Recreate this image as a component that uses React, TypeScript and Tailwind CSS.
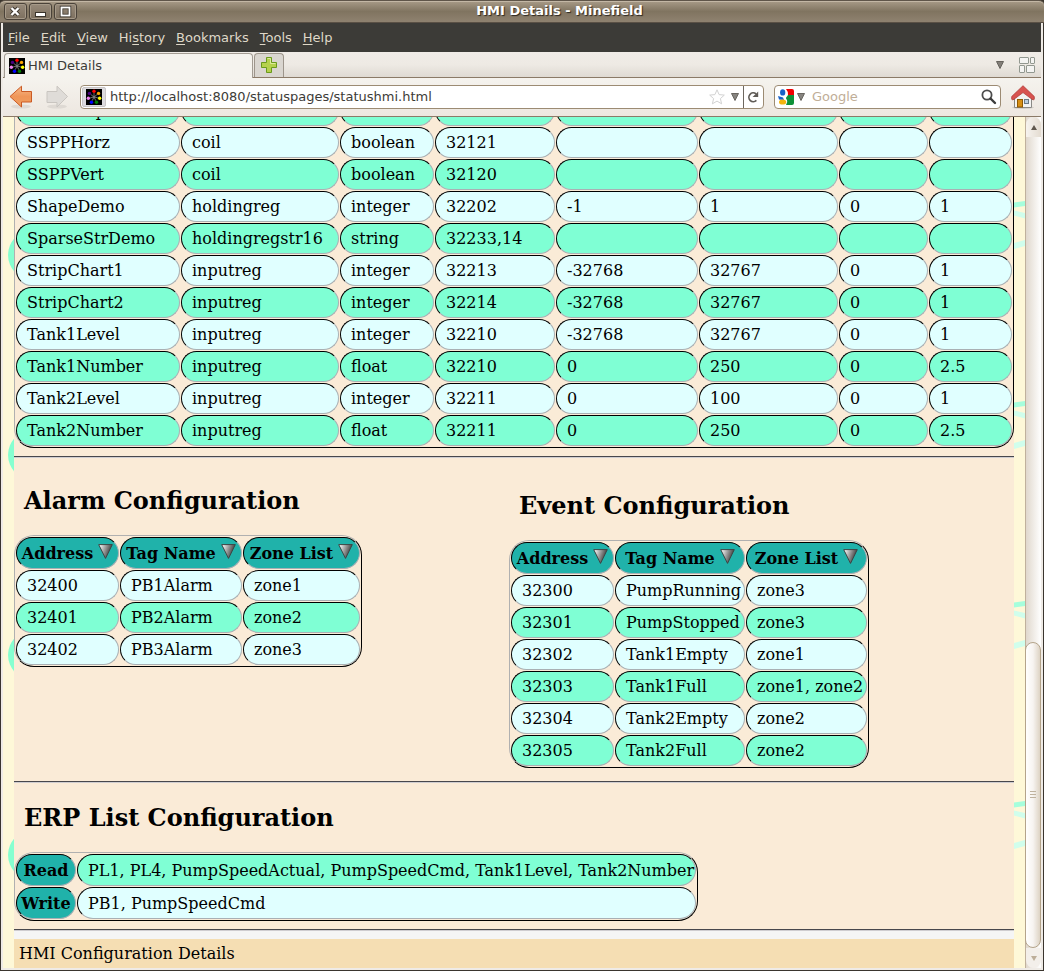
import React from "react";
import clsx from "clsx";

const tagRows: string[][] = [
  ["SSPPGrip", "coil", "boolean", "32122", "", "", "", ""],
  ["SSPPHorz", "coil", "boolean", "32121", "", "", "", ""],
  ["SSPPVert", "coil", "boolean", "32120", "", "", "", ""],
  ["ShapeDemo", "holdingreg", "integer", "32202", "-1", "1", "0", "1"],
  ["SparseStrDemo", "holdingregstr16", "string", "32233,14", "", "", "", ""],
  ["StripChart1", "inputreg", "integer", "32213", "-32768", "32767", "0", "1"],
  ["StripChart2", "inputreg", "integer", "32214", "-32768", "32767", "0", "1"],
  ["Tank1Level", "inputreg", "integer", "32210", "-32768", "32767", "0", "1"],
  ["Tank1Number", "inputreg", "float", "32210", "0", "250", "0", "2.5"],
  ["Tank2Level", "inputreg", "integer", "32211", "0", "100", "0", "1"],
  ["Tank2Number", "inputreg", "float", "32211", "0", "250", "0", "2.5"],
];

const alarmRows = [
  ["32400", "PB1Alarm", "zone1"],
  ["32401", "PB2Alarm", "zone2"],
  ["32402", "PB3Alarm", "zone3"],
];

const eventRows = [
  ["32300", "PumpRunning", "zone3"],
  ["32301", "PumpStopped", "zone3"],
  ["32302", "Tank1Empty", "zone1"],
  ["32303", "Tank1Full", "zone1, zone2"],
  ["32304", "Tank2Empty", "zone2"],
  ["32305", "Tank2Full", "zone2"],
];

const menus = ["File", "Edit", "View", "History", "Bookmarks", "Tools", "Help"];
// Index of the underlined access key in each menu label.
const accessKey: Record<string, number> = { History: 2 };

const tableClass =
  "border-separate border-spacing-[1px] rounded-[20px] border border-t-[#b0b0b0] border-l-[#b0b0b0] border-r-black border-b-black";
const cellClass =
  "h-[31px] whitespace-nowrap rounded-[16px] border border-t-black border-l-black border-r-[#a9b0b4] border-b-[#a9b0b4]";
const headClass = "bg-[#20b2aa] px-1 pt-[6px] pb-1 leading-5";

function Td({ green, children }: { green: boolean; children?: React.ReactNode }) {
  return (
    <td className={clsx(cellClass, "py-[5px] pr-0 pl-[10px] leading-[19px]", green ? "bg-[#7fffd4]" : "bg-[#e0ffff]")}>
      {children}
    </td>
  );
}

function SortIcon({ id }: { id: string }) {
  return (
    <svg className="h-[15px] w-[15px] self-start" viewBox="0 0 15 15" aria-hidden="true">
      <defs>
        <linearGradient id={id} x1="0" y1="0" x2="1" y2="0.35">
          <stop offset="0.1" stopColor="#f4f4f4" />
          <stop offset="1" stopColor="#303030" />
        </linearGradient>
      </defs>
      <path d="M0.7 0.6H14.3L7.5 14.4Z" fill={`url(#${id})`} stroke="#3c4444" strokeWidth="1" />
    </svg>
  );
}

function SortHeader({ label, id }: { label: string; id: string }) {
  return (
    <th className={clsx(cellClass, headClass)}>
      <button type="button" className="flex w-full items-center justify-center gap-[5px] font-bold">
        {label}
        <SortIcon id={id} />
      </button>
    </th>
  );
}

function ZoneTable({ name, rows, cols }: { name: string; rows: string[][]; cols: string[] }) {
  return (
    <table className={tableClass} aria-label={name}>
      <colgroup>
        {cols.map((c, i) => (
          <col key={i} className={c} />
        ))}
      </colgroup>
      <thead>
        <tr>
          <SortHeader label="Address" id={name + "-a"} />
          <SortHeader label="Tag Name" id={name + "-t"} />
          <SortHeader label="Zone List" id={name + "-z"} />
        </tr>
      </thead>
      <tbody>
        {rows.map((r, i) => (
          <tr key={r[0]}>
            {r.map((c, j) => (
              <Td key={j} green={i % 2 === 1}>{c}</Td>
            ))}
          </tr>
        ))}
      </tbody>
    </table>
  );
}

function Rule() {
  return <hr className="h-[2px] shrink-0 border-t border-b border-t-[#47474c] border-b-[#cfcdd0]" />;
}

function Heading({ children }: { children: React.ReactNode }) {
  return <h2 className="mt-5 mb-[19px] pl-[10px] text-2xl leading-[30px] font-bold">{children}</h2>;
}

function Favicon() {
  const dots = ["#ff0000", "#ffa500", "#ffff00", "#008000", "#0000ff", "#ee82ee", "#4b0082"];
  return (
    <svg className="h-4 w-4 shrink-0" viewBox="0 0 16 16" aria-hidden="true">
      <rect width="16" height="16" fill="#000" />
      {dots.map((c, i) => {
        const a = (i * 2 * Math.PI) / 7 - Math.PI / 2;
        const x = 8 + Math.cos(a) * 5.8;
        const y = 8 + Math.sin(a) * 5.8;
        return (
          <g key={c}>
            <line x1="8" y1="8" x2={8 + Math.cos(a) * 4} y2={8 + Math.sin(a) * 4} stroke="#777" strokeWidth="0.9" />
            <circle cx={x} cy={y} r="1.7" fill={c} />
          </g>
        );
      })}
      <circle cx="8" cy="8" r="1.3" fill="#777" />
    </svg>
  );
}

function Caret() {
  return (
    <svg className="h-2 w-2 shrink-0 text-[#5f5b55]" viewBox="0 0 8 8" aria-hidden="true">
      <path d="M0.5 0.5H7.5L4 7.5Z" fill="currentColor" fillOpacity="0.75" stroke="currentColor" strokeWidth="0.9" />
    </svg>
  );
}

function Arrow({ forward }: { forward?: boolean }) {
  return (
    <svg className="h-6 w-6" viewBox="0 0 24 24" aria-hidden="true">
      <defs>
        <linearGradient id="backFill" x1="0" y1="0" x2="0" y2="1">
          <stop offset="0" stopColor="#f6b98a" />
          <stop offset="0.5" stopColor="#ef9558" />
          <stop offset="1" stopColor="#f0a060" />
        </linearGradient>
      </defs>
      <ellipse cx="12" cy="21.5" rx="10" ry="2" fill="#000" opacity="0.07" />
      {forward ? (
        <path d="M22.5 11.5L12 1.2V6.5H2V17.5H12V22Z" fill="#dfdcd8" stroke="#c9c5c0" />
      ) : (
        <path d="M1 11.5L12.5 1.2V6.5H22.5V17H12.5V22Z" fill="url(#backFill)" stroke="#cb5a24" />
      )}
    </svg>
  );
}

function WindowButton({ label, children }: { label: string; children: React.ReactNode }) {
  return (
    <button type="button" aria-label={label} className="h-[17px] w-[23px] rounded-[3px] border border-[#4a4239] bg-gradient-to-b from-[#978a7a] to-[#7d705f] shadow-[inset_0_0_0_1px_#a69a89]">
      <svg className="mx-auto h-[15px] w-[21px]" viewBox="0 0 21 15" aria-hidden="true">{children}</svg>
    </button>
  );
}

// One margin of the page, showing the edge of the tiled backdrop.
function Gutter({ side }: { side: "left" | "right" }) {
  const id = "tile-" + side;
  return (
    <svg className="h-full w-[11px] shrink-0 bg-[#fef8d8]" aria-hidden="true">
      <defs>
        <pattern id={id} width="11" height="200" patternUnits="userSpaceOnUse">
          {side === "left" ? (
            <circle cx="30" cy="138" r="25" fill="#86ffd0" />
          ) : (
            <g>
              <path d="M0 85.5L11 84V89L0 90.5Z" fill="#a6fedc" />
              <path d="M0 93.5L11 96V101.5L0 98.5Z" fill="#d0feec" />
              <path d="M0 126L11 123V129L0 132Z" fill="#d0feec" />
            </g>
          )}
        </pattern>
      </defs>
      <rect width="100%" height="100%" fill={`url(#${id})`} />
    </svg>
  );
}

function BrowserChrome() {
  return (
    <>
      <nav className="flex h-[29px] shrink-0 items-center gap-[11px] bg-[#3c3b37] px-[5px] text-[#dfd8c8]">
        {menus.map((m) => {
          const k = accessKey[m] ?? 0;
          return (
            <button key={m} type="button">
              {m.slice(0, k)}
              <span className="underline underline-offset-2">{m[k]}</span>
              {m.slice(k + 1)}
            </button>
          );
        })}
      </nav>

      <div className="flex h-[26px] shrink-0 items-end border-b border-[#8b7a67] bg-gradient-to-b from-[#f0ece7] via-[#eeeae4] to-[#dfdad3] pl-px">
        <div className="-mb-px flex h-[25px] w-[249px] items-center gap-[3px] rounded-t-[4px] border border-b-0 border-[#a39c93] bg-[#f5f3ee] pb-px pl-1 text-[#3c3b37]">
          <Favicon />
          HMI Details
        </div>
        <button type="button" aria-label="New tab" className="ml-px flex h-6 w-[30px] items-center justify-center rounded-t-[4px] border border-b-0 border-[#9d958b] bg-[#dad6d0] pb-[2px]">
          <svg className="h-4 w-4" viewBox="0 0 16 16" aria-hidden="true">
            <path d="M5.5 0.5H10.5V5.5H15.5V10.5H10.5V15.5H5.5V10.5H0.5V5.5H5.5Z" fill="#b5d14c" stroke="#6a9a1c" />
            <path d="M6.5 1.5H9.5V6.5H14.5" fill="none" stroke="#dcea9c" />
          </svg>
        </button>
        <div className="flex flex-1 items-center justify-end gap-[15px] self-stretch pr-[6px]">
          <button type="button" aria-label="List all tabs"><Caret /></button>
          <button type="button" aria-label="Group tabs">
            <svg className="h-4 w-4" viewBox="0 0 16 16" fill="#f4f4f2" stroke="#929890" aria-hidden="true">
              <rect x="0.5" y="0.5" width="9" height="6" rx="0.5" />
              <rect x="11.5" y="0.5" width="4" height="6" rx="0.5" />
              <rect x="0.5" y="8.5" width="5" height="7" rx="0.5" />
              <rect x="7.5" y="8.5" width="8" height="7" rx="0.5" />
            </svg>
          </button>
        </div>
      </div>

      <div className="flex h-[39px] shrink-0 items-center border-b border-[#8b7a67] bg-gradient-to-b from-[#f5f3ee] to-[#ede7e0] pr-[6px] pl-[6px]">
        <button type="button" aria-label="Back"><Arrow /></button>
        <button type="button" aria-label="Forward" className="ml-3"><Arrow forward /></button>
        <div className="ml-[11px] flex h-6 flex-1 items-center rounded-[4px] border border-[#9c8b73] bg-white pl-px">
          <span className="flex h-5 w-6 items-center justify-center rounded-[2px] border border-[#c9c5c5] bg-[#dcdade]"><Favicon /></span>
          <input aria-label="Address" defaultValue="http://localhost:8080/statuspages/statushmi.html" className="ml-1 min-w-0 flex-1 bg-transparent text-[#3c3b37] outline-none" />
          <svg className="h-4 w-4" viewBox="0 0 16 16" aria-hidden="true">
            <path d="M8 0.8L10.1 5.6L15.3 6.1L11.4 9.6L12.6 14.8L8 12.1L3.4 14.8L4.6 9.6L0.7 6.1L5.9 5.6Z" fill="#fff" stroke="#d2d2d2" strokeLinejoin="round" />
          </svg>
          <button type="button" aria-label="Show history" className="mr-1 ml-[6px]"><Caret /></button>
          <button type="button" aria-label="Reload" className="flex h-full items-center border-l border-[#6d675f] pr-1 pl-[3px]">
            <svg className="h-3 w-3" viewBox="0 0 12 12" aria-hidden="true">
              <path d="M9.4 9.4A4.4 4.4 0 1 1 9 2.8" fill="none" stroke="#5f5b56" strokeWidth="1.7" />
              <path d="M11.2 0.4V6H5.6Z" fill="#5f5b56" />
            </svg>
          </button>
        </div>
        <div className="ml-[10px] flex h-6 w-[227px] items-center rounded-[4px] border border-[#9c8b73] bg-white px-[3px]">
          <svg className="h-4 w-4 shrink-0" viewBox="0 0 16 16" aria-hidden="true">
            <path d="M9 0H14Q16 0 16 2V6H10Q10 2 8 0Z" fill="#f00000" />
            <path d="M10 6H16V14Q16 16 14 16H8Q10 13 9 11Q7 9 9 7.5Z" fill="#0d9138" />
            <ellipse cx="4.7" cy="3.4" rx="2.6" ry="3.2" fill="#1760c8" />
            <path d="M0 7L5 8.5L6 11L1 10.5Z" fill="#1760c8" />
            <ellipse cx="4.6" cy="13" rx="3.6" ry="2.6" fill="#f5b50e" />
          </svg>
          <button type="button" aria-label="Choose search engine" className="ml-[3px]"><Caret /></button>
          <input aria-label="Search" placeholder="Google" className="ml-[7px] min-w-0 flex-1 bg-transparent outline-none placeholder:text-[#bfae97] placeholder:opacity-100" />
          <button type="button" aria-label="Search">
            <svg className="h-4 w-4" viewBox="0 0 16 16" fill="none" aria-hidden="true">
              <circle cx="6" cy="6" r="4.6" stroke="#4d4d4d" strokeWidth="1.8" />
              <path d="M9.5 9.5L14 14" stroke="#3c3c3c" strokeWidth="2.4" strokeLinecap="round" />
            </svg>
          </button>
        </div>
        <button type="button" aria-label="Home" className="ml-[10px]">
          <svg className="h-6 w-6" viewBox="0 0 24 24" aria-hidden="true">
            <ellipse cx="12" cy="22.5" rx="11" ry="1.4" fill="#000" opacity="0.12" />
            <path d="M3.5 12L12 4L20.5 12V22.5H3.5Z" fill="#f3f3f1" stroke="#8a8a86" />
            <path d="M12 0.7L23.3 11.5V14.3Q22.5 15.3 21 14.3L12 7.6L3 14.3Q1.5 15.3 0.7 14.3V11.5Z" fill="#d8534f" stroke="#a8302e" strokeWidth="0.7" />
            <rect x="6.5" y="14.5" width="5" height="7.5" fill="#d68f14" stroke="#8f5902" />
            <rect x="13.5" y="14.5" width="4" height="4" fill="#b9cde0" stroke="#6a7a86" />
          </svg>
        </button>
      </div>
    </>
  );
}

function ScrollBar() {
  return (
    <div className="flex w-4 shrink-0 flex-col border-l border-[#c0b19c] bg-gradient-to-r from-[#e0d8cd] to-white" aria-hidden="true">
      <div className="flex h-5 items-center justify-center rounded-t-full bg-gradient-to-r from-[#f6f3ef] to-[#e4dcd1]">
        <svg className="h-[5px] w-[6px]" viewBox="0 0 6 5"><path d="M3 0L6 5H0Z" fill="#5f574d" /></svg>
      </div>
      <div className="flex-[506]" />
      <div className="-ml-px flex flex-[305] flex-col items-center justify-center gap-[2px] rounded-full border border-[#b4a48b] bg-gradient-to-r from-white via-[#f7f4f1] to-[#ddd3c4]">
        <span className="h-px w-[6px] bg-[#bfb29e]" />
        <span className="h-px w-[6px] bg-[#bfb29e]" />
        <span className="h-px w-[6px] bg-[#bfb29e]" />
      </div>
      <div className="flex h-5 items-center justify-center rounded-b-full bg-[#f3efea]">
        <svg className="h-[5px] w-[6px]" viewBox="0 0 6 5"><path d="M3 5L6 0H0Z" fill="#bdae99" /></svg>
      </div>
    </div>
  );
}

function StatusPage() {
  return (
    <main className="flex min-w-0 flex-1 flex-col justify-end overflow-hidden bg-[#faebd7] font-['DejaVu_Serif','Liberation_Serif',serif] text-base text-black">
      <table className={clsx(tableClass, "mb-2 w-full table-fixed")} aria-label="Tag configuration">
        <colgroup>
          <col className="w-[164px]" />
          <col className="w-[158px]" />
          <col className="w-[94px]" />
          <col className="w-[120px]" />
          <col className="w-[142px]" />
          <col className="w-[139px]" />
          <col className="w-[89px]" />
          <col className="w-[83px]" />
        </colgroup>
        <tbody>
          {tagRows.map((r, i) => (
            <tr key={r[0]}>
              {r.map((c, j) => (
                <Td key={j} green={i % 2 === 0}>{c}</Td>
              ))}
            </tr>
          ))}
        </tbody>
      </table>
      <Rule />
      <div className="mt-2 mb-2 flex">
        <section className="w-[49.5%]">
          <Heading>Alarm Configuration</Heading>
          <ZoneTable name="alarms" rows={alarmRows} cols={["w-[103px]", "w-[122px]", "w-[117px]"]} />
        </section>
        <section className="py-[5px]">
          <Heading>Event Configuration</Heading>
          <ZoneTable name="events" rows={eventRows} cols={["w-[103px]", "w-[130px]", "w-[121px]"]} />
        </section>
      </div>
      <Rule />
      <section className="mb-2">
        <Heading>ERP List Configuration</Heading>
        <table className={tableClass} aria-label="ERP list">
          <colgroup>
            <col className="w-[60px]" />
            <col className="w-[619px]" />
          </colgroup>
          <tbody>
            <tr>
              <th className={clsx(cellClass, headClass)}>Read</th>
              <Td green>PL1, PL4, PumpSpeedActual, PumpSpeedCmd, Tank1Level, Tank2Number</Td>
            </tr>
            <tr>
              <th className={clsx(cellClass, headClass)}>Write</th>
              <Td green={false}>PB1, PumpSpeedCmd</Td>
            </tr>
          </tbody>
        </table>
      </section>
      <Rule />
      <footer className="border-t-8 border-[#f5f5f5] bg-[#f5deb3] p-[5px] leading-[19px]">HMI Configuration Details</footer>
    </main>
  );
}

export default function App() {
  return (
    <div className="flex h-screen flex-col overflow-hidden bg-[#3a352e] font-['DejaVu_Sans',sans-serif] text-[13px] leading-5">
      <header className="flex h-[23px] shrink-0 items-center gap-[2px] rounded-t-[5px] border-t border-b border-t-[#5f5549] border-b-[#5a5045] bg-gradient-to-b from-[#a89b88] via-[#807460] to-[#8f8270] px-1 shadow-[inset_0_1px_0_#c3b7a5]">
        <WindowButton label="Close">
          <path d="M6.5 4L13.5 11M13.5 4L6.5 11" stroke="#3a342c" strokeWidth="4" />
          <path d="M6.5 4L13.5 11M13.5 4L6.5 11" stroke="#fff" strokeWidth="2.4" />
        </WindowButton>
        <WindowButton label="Minimize">
          <rect x="5.5" y="8.5" width="10" height="4" fill="#fff" stroke="#3a342c" />
        </WindowButton>
        <WindowButton label="Maximize">
          <rect x="6.5" y="3.5" width="8" height="8" fill="none" stroke="#3a342c" strokeWidth="3.4" />
          <rect x="6.5" y="3.5" width="8" height="8" fill="none" stroke="#fff" strokeWidth="1.8" />
        </WindowButton>
        <h1 className="flex-1 pb-[2px] text-center leading-4 font-bold text-white [text-shadow:1px_1px_1px_#2b261f]">
          HMI Details - Minefield
        </h1>
      </header>
      <div className="mx-px mb-px flex min-h-0 flex-1 flex-col bg-[#efebe6] px-[2px] pb-[2px]">
        <BrowserChrome />
        <div className="flex min-h-0 flex-1">
          <Gutter side="left" />
          <StatusPage />
          <Gutter side="right" />
          <ScrollBar />
        </div>
      </div>
    </div>
  );
}
